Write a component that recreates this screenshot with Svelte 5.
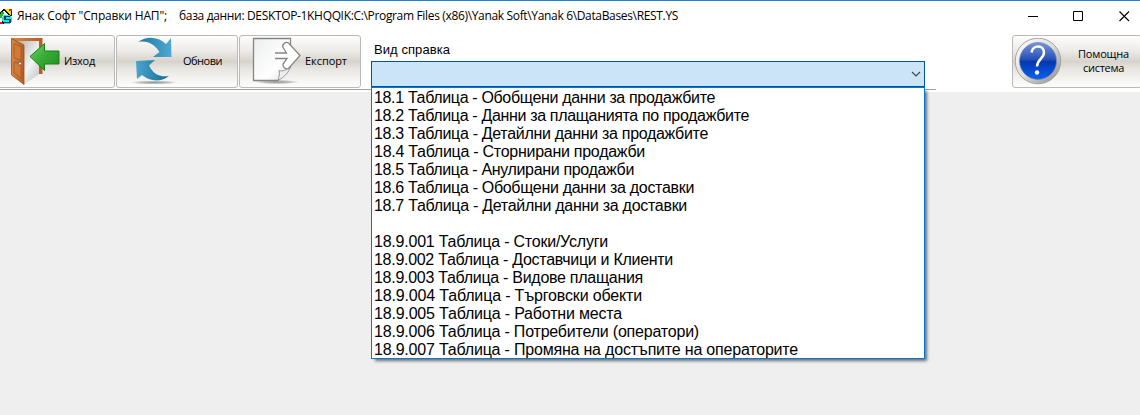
<script>
  const rows = [
    ['18.1 Таблица - Обобщени данни за продажбите', 341],
    ['18.2 Таблица - Данни за плащанията по продажбите', 375],
    ['18.3 Таблица - Детайлни данни за продажбите', 334],
    ['18.4 Таблица - Сторнирани продажби', 271],
    ['18.5 Таблица - Анулирани продажби', 260],
    ['18.6 Таблица - Обобщени данни за доставки', 320],
    ['18.7 Таблица - Детайлни данни за доставки', 313],
    ['', 0],
    ['18.9.001 Таблица - Стоки/Услуги', 234],
    ['18.9.002 Таблица - Доставчици и Клиенти', 299],
    ['18.9.003 Таблица - Видове плащания', 269],
    ['18.9.004 Таблица - Търговски обекти', 268],
    ['18.9.005 Таблица - Работни места', 248],
    ['18.9.006 Таблица - Потребители (оператори)', 325],
    ['18.9.007 Таблица - Промяна на достъпите на операторите', 424]
  ];

  // Spreads the letters of a label over the given width in pixels.
  function fit(node, width) {
    if (!width) return;
    const natural = node.getBoundingClientRect().width;
    node.style.letterSpacing = `${(width - natural) / node.textContent.length}px`;
  }
</script>

<div class="window">
  <header class="titlebar">
    <svg class="logo" width="12" height="17" viewBox="0 0 12 17" shape-rendering="crispEdges">
      <path d="M3 1h8v6H8z" fill="#ffe000" />
      <path d="M9 1h3v2H9z" fill="#e21b1b" />
      <path d="M0 5l4-3 7 6" fill="none" stroke="#111" stroke-width="1.5" />
      <path d="M0 10l3-6" stroke="#15c51c" stroke-width="2.500" />
      <path d="M0 14h3v2H0z" fill="#ee1616" />
      <circle cx="7" cy="11.500" r="5" fill="#19e5ef" />
      <path d="M10 8.500H5v3h5v3H4" fill="none" stroke="#0b3f4c" stroke-width="1.200" />
      <path d="M11.500 3v5M2 13l2 3" stroke="#111" />
    </svg>
    <div class="title">
      <span use:fit={150}>Янак Софт "Справки НАП";</span>
      <span use:fit={499}>база данни: DESKTOP-1KHQQIK:C:\Program Files (x86)\Yanak Soft\Yanak 6\DataBases\REST.YS</span>
    </div>
    <svg class="controls" width="112" height="14" viewBox="0 0 112 14" fill="none" stroke="#000">
      <path d="M3 7.500h10" />
      <path d="M48.500 2.500h9v9h-9z" />
      <path d="M94.500 2.500l9.500 9.500M104 2.500l-9.500 9.500" stroke-width="1.100" />
    </svg>
  </header>

  <div class="toolbar">
    <button class="exit">
      <svg width="50" height="50" viewBox="0 0 50 50">
        <defs>
          <linearGradient id="wood" x2="1"><stop stop-color="#d98747" /><stop offset="1" stop-color="#b65c20" /></linearGradient>
          <linearGradient id="room" x2="1" y2="1"><stop stop-color="#a8a8a8" /><stop offset=".6" stop-color="#f4f4f4" /><stop offset="1" stop-color="#bbb" /></linearGradient>
          <linearGradient id="green" x2="1" y2="1"><stop stop-color="#72d267" /><stop offset=".5" stop-color="#35ab35" /><stop offset="1" stop-color="#208a22" /></linearGradient>
        </defs>
        <path d="M1.500 1h31v36h-4V4h-27z" fill="url(#wood)" />
        <path d="M3 4h26v33l-15 10.500z" fill="url(#room)" />
        <path d="M1.500 1.500L14 8v39.500L1.500 38z" fill="url(#wood)" stroke="#9c4e1a" stroke-width=".8" />
        <path d="M4 6.500l7 3.500v13l-7-2zM4 25l7 2v14l-7-5z" fill="#cf7a3a" stroke="#a85720" stroke-width=".8" />
        <circle cx="10" cy="26.500" r="1.600" fill="#eee" stroke="#555" stroke-width=".8" />
        <path d="M20 19.500L34.500 6.500V14h14.500v13H34.500v6.500z" fill="url(#green)" stroke="#168119" />
      </svg>
      <span use:fit={31}>Изход</span>
    </button>
    <button class="refresh">
      <svg width="48" height="50" viewBox="0 0 48 50">
        <defs>
          <linearGradient id="blue" x2="1"><stop stop-color="#20789f" /><stop offset="1" stop-color="#4fa9d5" /></linearGradient>
          <linearGradient id="blue2" x2="1"><stop stop-color="#4aa5cf" /><stop offset="1" stop-color="#176c91" /></linearGradient>
          <radialGradient id="shade"><stop stop-color="#777" stop-opacity=".75" /><stop offset=".6" stop-color="#888" stop-opacity=".5" /><stop offset="1" stop-color="#999" stop-opacity="0" /></radialGradient>
        </defs>
        <ellipse cx="23" cy="45.500" rx="24" ry="2" fill="url(#shade)" />
        <path d="M7 5C15-1 27-1 35 7l5-6 .500 19H22l6.500-5C24 8 17 3 7 5z" fill="url(#blue)" />
        <path d="M38 39C29 46 18 44 11 38l-5 4-1-18 19-1-6 5.500c4 8 10 12 20 10.500z" fill="url(#blue2)" />
      </svg>
      <span use:fit={39}>Обнови</span>
    </button>
    <button class="export">
      <svg width="50" height="50" viewBox="0 0 50 50">
        <defs>
          <linearGradient id="paper" x2="1" y2="1"><stop stop-color="#eceeed" /><stop offset=".65" stop-color="#fff" /><stop offset="1" stop-color="#ddd" /></linearGradient>
        </defs>
        <ellipse cx="25" cy="45" rx="22" ry="2.200" fill="url(#shade)" />
        <path d="M1.500 1.500h37V30L26 43.500H1.500z" fill="url(#paper)" stroke="#858585" stroke-width="1.300" />
        <path d="M26 43.500c1-5 2-6 1-10 4 1 7 0 11-4-1 6-5 10-12 14z" fill="#eee" stroke="#999" />
        <path d="M23 16h11.500l-3.700-6c-.500-3 3-6 5.700-4L48 18.500 36.500 31.500c-3 1.500-6-2-5.500-4.500l4-5.500H23" fill="#fff" stroke="#858585" stroke-width="1.300" />
      </svg>
      <span use:fit={42}>Експорт</span>
    </button>

    <div class="picker">
      <label for="kind"><span use:fit={76}>Вид справка</span></label>
      <div class="combo" id="kind">
        <svg width="10" height="6" viewBox="0 0 10 6" fill="none" stroke="#444"><path d="M1 1l4 4 4-4" stroke-width="1.100" /></svg>
        <ul class="list">
          {#each rows as [text, width]}
            <li><span use:fit={width}>{text}</span></li>
          {/each}
        </ul>
      </div>
    </div>

    <button class="help">
      <svg width="48" height="48" viewBox="0 0 48 48">
        <defs>
          <linearGradient id="ring" y2="1" x2="1"><stop stop-color="#fff" /><stop offset=".5" stop-color="#ddd" /><stop offset="1" stop-color="#888" /></linearGradient>
          <linearGradient id="orb" x2="0" y2="1"><stop stop-color="#7994d8" /><stop offset=".45" stop-color="#2852b8" /><stop offset=".52" stop-color="#0438b0" /><stop offset="1" stop-color="#0961ef" /></linearGradient>
        </defs>
        <circle cx="24" cy="23" r="22.800" fill="url(#ring)" stroke="#a5a5a5" />
        <circle cx="24" cy="23" r="18.500" fill="url(#orb)" stroke="#7184b0" stroke-width=".7" />
        <path d="M17.500 14.500c1-8 12.500-8 12.500 0 0 6-7 7-7 14" fill="none" stroke="#fff" stroke-width="2.500" />
        <circle cx="23" cy="34.500" r="2.200" fill="#fff" />
      </svg>
      <span class="stack"><span use:fit={51}>Помощна</span><span use:fit={41}>система</span></span>
    </button>
  </div>
</div>

<style>
  :global(body) { margin: 0; background: #efefef; }
  .window { width: 1140px; height: 415px; overflow: hidden; background: #efefef; color: #000; }
  .titlebar { box-sizing: border-box; height: 31px; border-top: 1px solid #1a80d4; background: #fff; display: flex; align-items: center; }
  .logo { flex: none; margin-right: 5px; }
  .title { display: flex; font: 12px/16px "Open Sans", "Noto Sans", sans-serif; white-space: pre; gap: 12px; }
  .title span { flex: none; }
  .controls { margin: 0 3px 0 auto; }
  .toolbar { position: relative; box-sizing: border-box; height: 61px; background: #fff; display: flex; align-items: flex-start; padding-top: 4px; }
  .toolbar::after { content: ""; position: absolute; left: 0; top: 58px; width: 936px; height: 1px; background: #a0a0a0; }
  button { box-sizing: border-box; flex: none; width: 122px; height: 53px; margin: 0 1px 0 0; padding: 0; border: 1px solid #b9b9b9; border-radius: 3px; color: #000;
    background: linear-gradient(#fdfdfc, #eeece9 28%, #d7d3cc 50%, #e8e6e2 65%, #fdfdfc 98%);
    display: flex; align-items: center; font: 11px/14px "Open Sans", "Noto Sans", sans-serif; white-space: nowrap; }
  button svg { flex: none; }
  button > span { position: relative; top: -1px; }
  .exit { width: 118px; margin-left: -3px; padding-left: 12px; }
  .exit span { margin-left: 4px; }
  .refresh { padding-left: 14px; }
  .refresh span { margin-left: 4px; }
  .export { padding-left: 12px; }
  .export span { margin-left: 3px; }
  .picker { width: 554px; margin-left: 9px; }
  label { box-sizing: border-box; display: block; height: 26px; padding: 4px 0 0 3px; font: 13px/22px "Liberation Sans", Arial, sans-serif; }
  label span, li span { display: inline-block; white-space: pre; }
  .combo { position: relative; box-sizing: border-box; width: 554px; height: 26px; border: 1px solid #00549c; background: #cce4f7; display: flex; align-items: center; justify-content: flex-end; padding-right: 3px; z-index: 1; }
  .list { position: absolute; left: -1px; top: 25px; box-sizing: border-box; width: 554px; height: 272px; margin: 0; padding: 0 0 0 2px; list-style: none; border: 1px solid #0078d7; background: #fff; box-shadow: 3px 3px 3px -1px rgba(0, 0, 0, .55); font: 16px/19px "Liberation Sans", Arial, sans-serif; }
  li { height: 18px; line-height: 19px; }
  .help { width: 130px; margin: 0 -2px 0 auto; }
  .help svg { margin-left: 1px; }
  .stack { display: flex; flex-direction: column; align-items: center; width: 51px; margin-left: 16px; }
</style>
